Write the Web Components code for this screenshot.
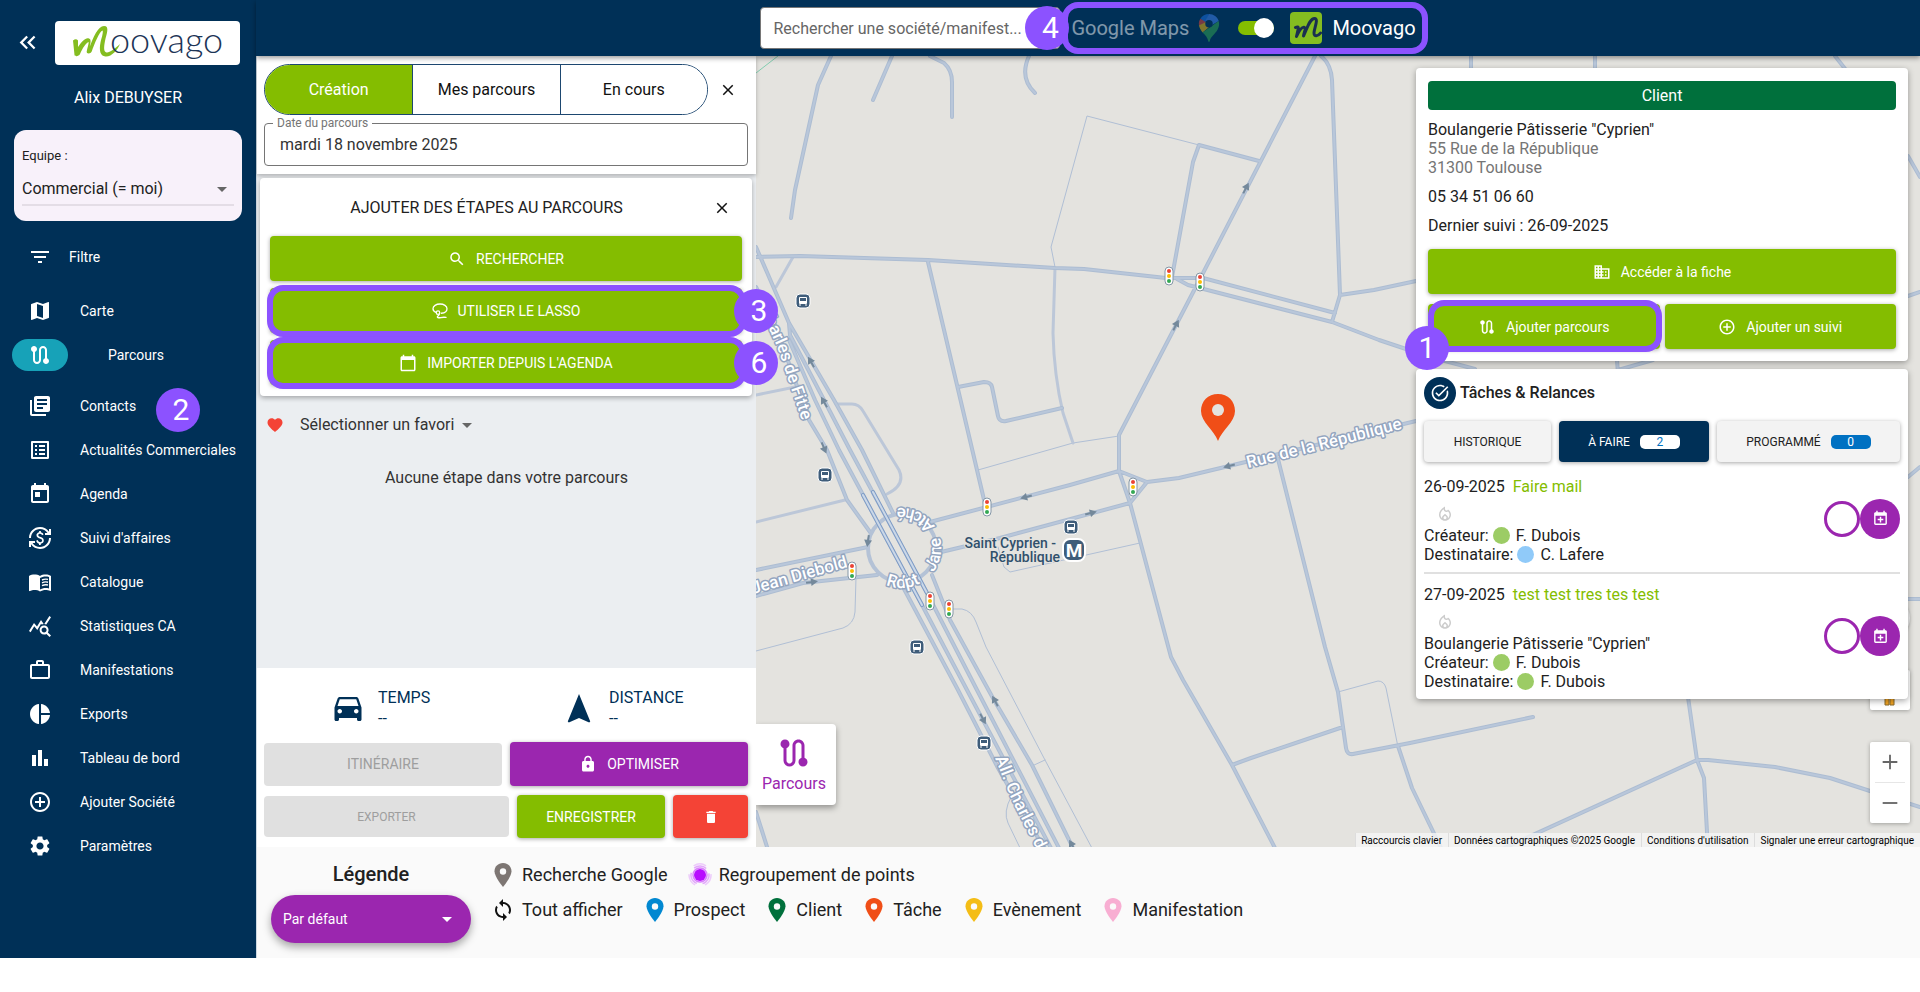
<!DOCTYPE html>
<html lang="fr">
<head>
<meta charset="utf-8">
<meta name="viewport" content="width=device-width, initial-scale=1">
<title>Moovago - Parcours</title>
<style>
  html, body { margin: 0; height: 100%; background: #fff; }
  body { font-family: Roboto, "Noto Sans", sans-serif; font-size: 16px; color: #212121; }
</style>
</head>
<body>
<mv-app></mv-app>

<script>
const ICONS = {
  collapse: '<path d="M17.59 18 19 16.59 14.42 12 19 7.41 17.59 6l-6 6zM11 18l1.41-1.41L7.83 12l4.58-4.59L11 6l-6 6z"/>',
  filter: '<path d="M10 18h4v-2h-4v2zM3 6v2h18V6H3zm3 7h12v-2H6v2z"/>',
  map: '<path d="M20.5 3l-.16.03L15 5.1 9 3 3.36 4.9c-.21.07-.36.25-.36.48V20.5c0 .28.22.5.5.5l.16-.03L9 18.9l6 2.1 5.64-1.9c.21-.07.36-.25.36-.48V3.5c0-.28-.22-.5-.5-.5zM15 19l-6-2.11V5l6 2.11V19z"/>',
  route: '<path d="M19 15.18V7c0-2.21-1.79-4-4-4s-4 1.79-4 4v10c0 1.1-.9 2-2 2s-2-.9-2-2V8.82C8.16 8.4 9 7.3 9 6c0-1.66-1.34-3-3-3S3 4.34 3 6c0 1.3.84 2.4 2 2.82V17c0 2.21 1.79 4 4 4s4-1.79 4-4V7c0-1.1.9-2 2-2s2 .9 2 2v8.18c-1.16.41-2 1.51-2 2.82 0 1.66 1.34 3 3 3s3-1.34 3-3c0-1.3-.84-2.4-2-2.82z"/>',
  contacts: '<path d="M4 6H2v14c0 1.1.9 2 2 2h14v-2H4V6zm16-4H8c-1.1 0-2 .9-2 2v12c0 1.1.9 2 2 2h12c1.1 0 2-.9 2-2V4c0-1.1-.9-2-2-2zm-1 9H9V9h10v2zm-4 4H9v-2h6v2zm4-8H9V5h10v2z"/>',
  list: '<path d="M19 5v14H5V5h14m1.1-2H3.9c-.5 0-.9.4-.9.9v16.2c0 .4.4.9.9.9h16.2c.4 0 .9-.5.9-.9V3.9c0-.5-.5-.9-.9-.9zM11 7h6v2h-6V7zm0 4h6v2h-6v-2zm0 4h6v2h-6zM7 7h2v2H7zm0 4h2v2H7zm0 4h2v2H7z"/>',
  today: '<path d="M19 3h-1V1h-2v2H8V1H6v2H5c-1.11 0-1.99.9-1.99 2L3 19c0 1.1.89 2 2 2h14c1.1 0 2-.9 2-2V5c0-1.1-.9-2-2-2zm0 16H5V8h14v11zM7 10h5v5H7z"/>',
  currency: '<path d="M12.89 11.1c-1.78-.59-2.64-.96-2.64-1.9 0-1.02 1.11-1.39 1.81-1.39 1.31 0 1.79.99 1.9 1.34l1.58-.67c-.15-.44-.82-1.91-2.66-2.23V5h-1.75v1.26c-2.6.56-2.62 2.85-2.62 2.96 0 2.27 2.25 2.91 3.35 3.31 1.58.56 2.28 1.07 2.28 2.03 0 1.13-1.05 1.61-1.98 1.61-1.82 0-2.34-1.87-2.4-2.09l-1.66.67c.63 2.19 2.28 2.78 2.9 2.96V19h1.75v-1.24c.52-.09 3.02-.59 3.02-3.22.01-1.39-.6-2.61-2.88-3.44zM3 21H1v-6h6v2H4.52c1.61 2.41 4.36 4 7.48 4 4.97 0 9-4.03 9-9h2c0 6.08-4.92 11-11 11-3.72 0-7.01-1.85-9-4.67V21zM1 12C1 5.92 5.92 1 12 1c3.72 0 7.01 1.85 9 4.67V3h2v6h-6V7h2.48C17.87 4.59 15.12 3 12 3c-4.97 0-9 4.03-9 9H1z"/>',
  book: '<path d="M21 5c-1.11-.35-2.33-.5-3.5-.5-1.95 0-4.05.4-5.5 1.5-1.45-1.1-3.55-1.5-5.5-1.5S2.45 4.9 1 6v14.65c0 .25.25.5.5.5.1 0 .15-.05.25-.05C3.1 20.45 5.05 20 6.5 20c1.95 0 4.05.4 5.5 1.5 1.35-.85 3.8-1.5 5.5-1.5 1.65 0 3.35.3 4.75 1.05.1.05.15.05.25.05.25 0 .5-.25.5-.5V6c-.6-.45-1.25-.75-2-1zm0 13.5c-1.1-.35-2.3-.5-3.5-.5-1.7 0-4.15.65-5.5 1.5V8c1.35-.85 3.8-1.5 5.5-1.5 1.2 0 2.4.15 3.5.5v11.5z"/><path d="M14 10q3-1.4 6-.6M14 12.8q3-1.4 6-.6M14 15.6q3-1.4 6-.6" fill="none" stroke="currentColor" stroke-width="1.4"/>',
  stats: '<path d="M19.88 18.47c.44-.7.7-1.51.7-2.39 0-2.49-2.01-4.5-4.5-4.5s-4.5 2.01-4.5 4.5 2.01 4.5 4.49 4.5c.88 0 1.7-.26 2.39-.7L21.58 23 23 21.58l-3.12-3.11zm-3.8.11c-1.38 0-2.5-1.12-2.5-2.5s1.12-2.5 2.5-2.5 2.5 1.12 2.5 2.5-1.12 2.5-2.5 2.5zm-.36-8.5c-.74.02-1.45.18-2.1.45l-.55-.83-3.8 6.18-3.01-3.52-3.63 5.81L1 17l5-8 3 3.5L13 6l2.72 4.08zm2.59.5c-.64-.28-1.33-.45-2.05-.49L21.38 2 23 3.18l-4.69 7.4z"/>',
  work: '<path d="M14 6V4h-4v2h4zM4 8v11h16V8H4zm16-2c1.11 0 2 .89 2 2v11c0 1.11-.89 2-2 2H4c-1.11 0-2-.89-2-2l.01-11c0-1.11.88-2 1.99-2h4V4c0-1.11.89-2 2-2h4c1.11 0 2 .89 2 2v2h4z"/>',
  pie: '<path d="M11 2v20c-5.07-.5-9-4.79-9-10s3.93-9.5 9-10zm2.03 0v8.99H22c-.47-4.74-4.24-8.52-8.97-8.99zm0 11.01V22c4.74-.47 8.5-4.25 8.97-8.99h-8.97z"/>',
  bars: '<path d="M4 9h4v11H4zM16 13h4v7h-4zM10 4h4v16h-4z"/>',
  add: '<path d="M13 7h-2v4H7v2h4v4h2v-4h4v-2h-4V7zm-1-5C6.48 2 2 6.48 2 12s4.48 10 10 10 10-4.48 10-10S17.52 2 12 2zm0 18c-4.41 0-8-3.59-8-8s3.59-8 8-8 8 3.59 8 8-3.59 8-8 8z"/>',
  settings: '<path d="M19.14 12.94c.04-.3.06-.61.06-.94 0-.32-.02-.64-.07-.94l2.03-1.58c.18-.14.23-.41.12-.61l-1.92-3.32c-.12-.22-.37-.29-.59-.22l-2.39.96c-.5-.38-1.03-.7-1.62-.94l-.36-2.54c-.04-.24-.24-.41-.48-.41h-3.84c-.24 0-.43.17-.47.41l-.36 2.54c-.59.24-1.13.57-1.62.94l-2.39-.96c-.22-.08-.47 0-.59.22L2.74 8.87c-.12.21-.08.47.12.61l2.03 1.58c-.05.3-.09.63-.09.94s.02.64.07.94l-2.03 1.58c-.18.14-.23.41-.12.61l1.92 3.32c.12.22.37.29.59.22l2.39-.96c.5.38 1.03.7 1.62.94l.36 2.54c.05.24.24.41.48.41h3.84c.24 0 .44-.17.47-.41l.36-2.54c.59-.24 1.13-.56 1.62-.94l2.39.96c.22.08.47 0 .59-.22l1.92-3.32c.12-.22.07-.47-.12-.61l-2.01-1.58zM12 15.6c-1.98 0-3.6-1.62-3.6-3.6s1.62-3.6 3.6-3.6 3.6 1.62 3.6 3.6-1.62 3.6-3.6 3.6z"/>',
  search: '<path d="M15.5 14h-.79l-.28-.27C15.41 12.59 16 11.11 16 9.5 16 5.91 13.09 3 9.5 3S3 5.91 3 9.5 5.91 16 9.5 16c1.61 0 3.09-.59 4.23-1.57l.27.28v.79l5 4.99L20.49 19l-4.99-5zm-6 0C7.01 14 5 11.99 5 9.5S7.01 5 9.5 5 14 7.01 14 9.5 11.99 14 9.5 14z"/>',
  close: '<path d="M19 6.41 17.59 5 12 10.59 6.41 5 5 6.41 10.59 12 5 17.59 6.41 19 12 13.41 17.59 19 19 17.59 13.41 12z"/>',
  lasso: '<g fill="none" stroke="currentColor" stroke-width="2" stroke-linecap="round"><path d="M6 14C3.400 13 1.500 11 1.500 8.500 1.500 4.500 6.200 1.500 12 1.500s10.500 3 10.500 7c0 3.600-3.800 6.300-8.500 6.900"/><circle cx="9" cy="14.500" r="2.600"/><path d="M11 16.500c0 2-3 3-3 4.500 0 1.400 3 1.300 5 .8 2-.4 5-.6 8-.3"/></g>',
  calendar: '<path d="M20 3h-1V1h-2v2H7V1H5v2H4c-1.1 0-2 .9-2 2v16c0 1.1.9 2 2 2h16c1.1 0 2-.9 2-2V5c0-1.1-.9-2-2-2zm0 18H4V8h16v13z"/>',
  heart: '<path d="M12 21.35l-1.45-1.32C5.4 15.36 2 12.28 2 8.5 2 5.42 4.42 3 7.5 3c1.74 0 3.41.81 4.5 2.09C13.09 3.81 14.76 3 16.5 3 19.58 3 22 5.42 22 8.5c0 3.78-3.4 6.86-8.55 11.54L12 21.35z"/>',
  car: '<path d="M18.92 5.01C18.72 4.42 18.16 4 17.5 4h-11c-.66 0-1.21.42-1.42 1.01L3 11v8c0 .55.45 1 1 1h1c.55 0 1-.45 1-1v-1h12v1c0 .55.45 1 1 1h1c.55 0 1-.45 1-1v-8l-2.08-5.99zM6.5 15c-.83 0-1.5-.67-1.5-1.5S5.67 12 6.5 12s1.5.67 1.5 1.5S7.33 15 6.5 15zm11 0c-.83 0-1.5-.67-1.5-1.5s.67-1.5 1.5-1.5 1.5.67 1.5 1.5-.67 1.5-1.5 1.5zM5 10l1.5-4.5h11L19 10H5z"/>',
  navigation: '<path d="M12 2L4.5 20.290l.71.71L12 18l6.790 3 .71-.71z"/>',
  lock: '<path d="M18 8h-1V6c0-2.76-2.24-5-5-5S7 3.24 7 6v2H6c-1.1 0-2 .9-2 2v10c0 1.1.9 2 2 2h12c1.1 0 2-.9 2-2V10c0-1.1-.9-2-2-2zm-6 9c-1.1 0-2-.9-2-2s.9-2 2-2 2 .9 2 2-.9 2-2 2zm3.1-9H8.9V6c0-1.71 1.39-3.1 3.1-3.1 1.71 0 3.1 1.39 3.1 3.1v2z"/>',
  trash: '<path d="M6 19c0 1.1.9 2 2 2h8c1.1 0 2-.9 2-2V7H6v12zM19 4h-3.500l-1-1h-5l-1 1H5v2h14V4z"/>',
  building: '<path d="M12 7V3H2v18h20V7H12zM6 19H4v-2h2v2zm0-4H4v-2h2v2zm0-4H4V9h2v2zm0-4H4V5h2v2zm4 12H8v-2h2v2zm0-4H8v-2h2v2zm0-4H8V9h2v2zm0-4H8V5h2v2zm10 12h-8v-2h2v-2h-2v-2h2v-2h-2V9h8v10zm-2-8h-2v2h2v-2zm0 4h-2v2h2v-2z"/>',
  task: '<path d="M22 5.18L10.59 16.6l-4.24-4.24 1.41-1.41 2.83 2.83 10-10L22 5.18zm-2.21 5.04c.13.57.21 1.17.21 1.78 0 4.42-3.58 8-8 8s-8-3.58-8-8 3.58-8 8-8c1.58 0 3.04.46 4.28 1.25l1.44-1.44C16.1 2.67 14.13 2 12 2 6.48 2 2 6.48 2 12s4.48 10 10 10 10-4.48 10-10c0-1.19-.22-2.33-.6-3.39l-1.61 1.61z"/>',
  flame: '<path d="M16 6l-.44.55C14.38 8.02 12 7.19 12 5.3V2S4 6 4 13c0 4.42 3.58 8 8 8s8-3.58 8-8c0-2.96-1.61-5.62-4-7zm-4 13c-1.1 0-2-.87-2-1.94 0-.51.2-.99.58-1.36L12 14.3l1.43 1.4c.37.37.57.85.57 1.36 0 1.07-.9 1.94-2 1.94zm3.96-1.5c.04-.36.22-1.89-1.13-3.22L12 11.5l-2.83 2.78C7.81 15.62 8 17.16 8.04 17.5 6.79 16.4 6 14.79 6 13c0-3.16 2.13-5.65 4.03-7.25.23 1.99 1.93 3.55 3.99 3.55.78 0 1.54-.23 2.18-.66 1.1 1.11 1.8 2.69 1.8 4.36 0 1.79-.79 3.4-2.04 4.5z"/>',
  calplus: '<path d="M19 3h-1V1h-2v2H8V1H6v2H5c-1.110 0-2 .9-2 2v14c0 1.100.890 2 2 2h14c1.100 0 2-.9 2-2V5c0-1.100-.9-2-2-2zm0 16H5V8h14v11zM11 9.500h2v3h3v2h-3v3h-2v-3H8v-2h3z"/>',
  sync: '<path d="M12 4V1L8 5l4 4V6c3.31 0 6 2.69 6 6 0 1.01-.25 1.97-.7 2.8l1.46 1.46C19.54 15.03 20 13.57 20 12c0-4.42-3.58-8-8-8zm0 14c-3.31 0-6-2.69-6-6 0-1.01.25-1.97.7-2.8L5.24 7.74C4.46 8.97 4 10.43 4 12c0 4.42 3.58 8 8 8v3l4-4-4-4v3z"/>',
  pin: '<path d="M12 0C7 0 3.500 3.600 3.500 8.300 3.500 14 12 24 12 24s8.500-10 8.500-15.700C20.500 3.600 17 0 12 0z"/><circle cx="12" cy="8.500" r="3.200" fill="#fafafa"/>',
  caret: '<path d="M7 10l5 5 5-5z"/>',
  plus: '<path d="M11 4h2v7h7v2h-7v7h-2v-7H4v-2h7z"/>',
  minus: '<path d="M4 11h16v2H4z"/>',
  cluster: '<g fill="none" stroke="#b80dff"><circle cx="12" cy="12" r="11" stroke-opacity=".2" stroke-width="1.500" stroke-dasharray="13 10" transform="rotate(-125 12 12)"/><circle cx="12" cy="12" r="9" stroke-opacity=".35" stroke-width="1.500" stroke-dasharray="13 5.800" transform="rotate(-130 12 12)"/><circle cx="12" cy="12" r="7" stroke-opacity=".5" stroke-width="1.500"/></g><circle cx="12" cy="12" r="6" fill="#b80dff"/>',
  gmaps: '<path d="M12 0C8.800 0 6 1.500 4.600 4l4.400 4z" fill="#1a73e8"/><path d="M4.600 4C3.500 5.500 3 7.500 3.400 9.800L7.600 12 9.200 6.800z" fill="#ea4335"/><path d="M12 0c4 0 7.200 2.500 8.300 6L14.500 9.500 9 5.500z" fill="#4285f4"/><path d="M3.400 9.800c.4 2.200 1.600 4 3.100 6L14.800 9 12 5.500z" fill="#fbbc04"/><path d="M20.300 6c.8 2.800.2 5.200-1 7.400C17 17.500 13.500 19 12.600 23.300c-.2.900-1 .9-1.200 0C10.800 20 9 18.200 6.500 15.800z" fill="#34a853"/><circle cx="12" cy="8.300" r="3.200" fill="#003057"/>'
};

/* Registers an element whose shadow root is cloned from a template. */
function define(tag, css, html) {
  const fixed = typeof html === 'string' ? makeTemplate(css, html) : null;
  customElements.define(tag, class extends HTMLElement {
    connectedCallback() {
      if (this.shadowRoot) return;
      const tpl = fixed || makeTemplate(css, html(this));
      this.attachShadow({ mode: 'open' }).append(tpl.content.cloneNode(true));
    }
  });
}
function makeTemplate(css, html) {
  const t = document.createElement('template');
  t.innerHTML = `<style>*{box-sizing:border-box}${css}</style>${html}`;
  return t;
}

define('mv-icon', `
  :host { display: inline-flex; flex: none; width: var(--size, 24px); height: var(--size, 24px); }
  svg { width: 100%; height: 100%; fill: currentColor; display: block; }
`, el => `<svg viewBox="0 0 24 24" aria-hidden="true">${ICONS[el.getAttribute('name')]}</svg>`);

define('mv-step', `
  :host { position: absolute; z-index: 5; display: flex; align-items: center; justify-content: center;
    width: 44px; height: 44px; border-radius: 50%; background: #8c52ff; color: #fff; padding-left: 6px;
    font: 30px/44px Roboto, sans-serif; }
`, '<slot></slot>');

define('mv-button', `
  :host { display: block; position: relative; }
  button { display: flex; align-items: center; justify-content: center; gap: 10px; width: 100%; height: var(--h, 45px);
    padding: 0 8px; border: 0; border-radius: 4px; background: var(--bg, #84bd00); color: var(--fg, #fff);
    font: 14px/20px Roboto, sans-serif; box-shadow: 0 1px 4px rgba(0,0,0,.35); cursor: pointer; }
  button:disabled { background: #e0e0e0; color: #9e9e9e; box-shadow: none; cursor: default; }
  :host([framed])::after { content: ""; position: absolute; inset: var(--frame, -3px -4px -4px -3px);
    border: 6px solid #8c52ff; border-radius: 16px; pointer-events: none; }
  :host([small]) button { font-size: 12px; }
`, el => `<button type="button" ${el.hasAttribute('disabled') ? 'disabled' : ''} ${el.title ? `aria-label="${el.title}"` : ''}>
  ${el.hasAttribute('icon') ? `<mv-icon name="${el.getAttribute('icon')}" style="--size:${el.getAttribute('icon-size') || 18}px"></mv-icon>` : ''}<slot></slot></button>`);

define('mv-nav-item', `
  :host { display: block; }
  a { display: flex; align-items: center; height: 44px; padding-left: 12px; color: #fff; text-decoration: none;
    font: 14px/20px Roboto, sans-serif; }
  .pill { display: flex; align-items: center; justify-content: center; width: 56px; height: 32px; border-radius: 16px; margin-right: 12px; }
  :host([wide]) .pill { margin-right: 1px; }
  :host([active]) .pill { background: #17a2b8; margin-right: 40px; }
  :host([gap]) { margin-top: 7px; }
`, el => `<a href="#"><span class="pill"><mv-icon name="${el.getAttribute('icon')}"></mv-icon></span><slot></slot></a>`);

define('mv-logo', `
  :host { display: block; width: 185px; height: 44px; background: #fff; border-radius: 4px; }
  svg { display: block; }
`, `<svg width="185" height="44" viewBox="0 0 185 44" role="img" aria-label="Moovago">
    <path d="M18 19.500q3-2.500 5 0v6.500c4-6 8-10 11-8.500 2.500 1 1.500 4 .8 8C38 17 43 5 49 5c6 0 2.500 8 1 15-1.200 6-1.500 11 1.500 11.500 3 .5 8-3.500 13.500-8.500-2.500 6-8.500 13-14.500 12.500-5.500-.5-6.500-6.500-5-14 .8-4 2.800-9 2.200-12-3.500 1-8 13-11 21-1 2.500-5.500 2.500-5 0 .5-3.500 2-7 2-9.500-3 1-6 6-8.700 12-1 2.300-5 3-5.500 1z" fill="#84bd20"/>
    <text x="55" y="32" font-family="Lato" font-size="36" font-weight="300" fill="#1d3557">oovago</text>
  </svg>`);

define('mv-sidebar', `
  :host { display: flex; flex-direction: column; width: 256px; background: #003057; color: #fff; position: relative; }
  .brand { display: flex; align-items: center; gap: 14px; padding: 21px 0 0 14px; }
  .collapse { border: 0; padding: 0; background: none; color: #fff; height: 28px; width: 27px; --size: 27px; cursor: pointer; }
  .user { text-align: center; line-height: 24px; margin-top: 21px; }
  .team { margin: 20px 14px 0; height: 91px; border-radius: 12px; background: #f8f1fa; color: #212121; padding: 17px 8px 0; }
  .team label { display: block; font-size: 13px; line-height: 18px; }
  .field { position: relative; display: flex; align-items: center; height: 32px; margin-top: 9px; border-bottom: 2px solid #e4dde6; }
  select { appearance: none; width: 100%; height: 24px; border: 0; padding: 0; background: none; color: inherit; font: 16px/24px Roboto, sans-serif; }
  .field mv-icon { position: absolute; right: 0; color: #666; pointer-events: none; }
  nav { display: flex; flex-direction: column; }
  nav.filter { margin-top: 14px; margin-bottom: 10px; }
`, `
  <div class="brand"><button class="collapse" type="button" aria-label="Réduire le menu"><mv-icon name="collapse"></mv-icon></button><mv-logo></mv-logo></div>
  <div class="user">Alix DEBUYSER</div>
  <div class="team"><label for="team">Equipe :</label>
    <div class="field"><select id="team"><option>Commercial (= moi)</option></select><mv-icon name="caret"></mv-icon></div></div>
  <nav class="filter"><mv-nav-item icon="filter" wide>Filtre</mv-nav-item></nav>
  <nav>
    <mv-nav-item icon="map">Carte</mv-nav-item>
    <mv-nav-item icon="route" active>Parcours</mv-nav-item>
    <mv-nav-item icon="contacts" gap>Contacts</mv-nav-item>
    <mv-nav-item icon="list">Actualités Commerciales</mv-nav-item>
    <mv-nav-item icon="today">Agenda</mv-nav-item>
    <mv-nav-item icon="currency">Suivi d'affaires</mv-nav-item>
    <mv-nav-item icon="book">Catalogue</mv-nav-item>
    <mv-nav-item icon="stats">Statistiques CA</mv-nav-item>
    <mv-nav-item icon="work">Manifestations</mv-nav-item>
    <mv-nav-item icon="pie">Exports</mv-nav-item>
    <mv-nav-item icon="bars">Tableau de bord</mv-nav-item>
    <mv-nav-item icon="add">Ajouter Société</mv-nav-item>
    <mv-nav-item icon="settings">Paramètres</mv-nav-item>
  </nav>
  <mv-step style="left:156px;top:388px">2</mv-step>`);

define('mv-topbar', `
  :host { display: flex; align-items: center; justify-content: center; gap: 11px; height: 56px; background: #003057;
    box-shadow: 0 2px 5px rgba(0,0,0,.4); position: relative; z-index: 3; }
  .search { width: 300px; height: 42px; border: 1px solid #767676; border-radius: 4px; padding: 0 12px; background: #fff;
    font: 16px/24px Roboto, sans-serif; color: #212121; }
  .search::placeholder { color: #666; opacity: 1; }
  .provider { position: relative; display: flex; align-items: center; color: #fff; font-size: 20px; line-height: 28px; white-space: nowrap; }
  .provider::after { content: ""; position: absolute; inset: -10px -12px -10px -9px; border: 6px solid #8c52ff; border-radius: 16px; pointer-events: none; }
  .off { opacity: .5; display: flex; align-items: center; gap: 6px; }
  .off mv-icon { --size: 28px; }
  input[type=checkbox] { appearance: none; position: relative; width: 36px; height: 20px; margin: 0 16px 0 15px; cursor: pointer; }
  input[type=checkbox]::before { content: ""; position: absolute; left: 0; top: 3px; width: 36px; height: 14px; border-radius: 7px; background: #84bd00; }
  input[type=checkbox]::after { content: ""; position: absolute; right: 0; top: 0; width: 20px; height: 20px; border-radius: 50%; background: #fff; }
  .tile { width: 32px; height: 32px; margin-right: 10px; }
  mv-step { left: -46px; top: -6px; }
`, `
  <input class="search" type="search" aria-label="Rechercher une société" placeholder="Rechercher une société/manifest...">
  <div class="provider">
    <span class="off">Google Maps<mv-icon name="gmaps"></mv-icon></span>
    <input type="checkbox" id="src" checked aria-label="Utiliser Moovago">
    <svg class="tile" viewBox="0 0 32 32" aria-hidden="true"><rect width="32" height="32" rx="4" fill="#84bd20"/>
      <path d="M5.500 15.500c2-1.200 3-.5 2.800 1L6.500 24.500C9 19 12 14.500 14.500 15.500c2 1-.8 5-1 8.500C17 17 19.500 6.500 24.500 6.500c4.500 0-.5 10-.5 14.500 0 4 4 3.500 6.500 0" fill="none" stroke="#1a2f50" stroke-width="3" stroke-linecap="round" stroke-linejoin="round"/></svg>
    <label for="src">Moovago</label>
    <mv-step>4</mv-step>
  </div>`);

define('mv-route-panel', `
  :host { display: flex; flex-direction: column; width: 500px; flex: none; background: #ebeef1; border-left: 1px solid #cdd8e2; }
  .head { background: #fff; padding: 8px 8px 8px 7px; box-shadow: 0 2px 4px rgba(0,0,0,.25); }
  .tabs { display: flex; align-items: center; }
  .seg { display: grid; grid-template-columns: repeat(3, 1fr); width: 444px; height: 51px; border: 1px solid #1d4770; border-radius: 26px; overflow: hidden; }
  .seg button { border: 0; background: #fff; color: #111; font: 16px/24px Roboto, sans-serif; }
  .seg button + button { border-left: 1px solid #1d4770; }
  .seg .on { background: #84bd00; color: #fff; }
  .x { width: 24px; height: 24px; border: 0; padding: 0; background: none; color: #111; --size: 18px; display: flex; align-items: center; justify-content: center; cursor: pointer; }
  .tabs .x { margin-left: 8px; }
  fieldset { margin: 0; padding: 0 15px; border: 1px solid #757575; border-radius: 4px; height: 51px; }
  legend { margin-left: -7px; padding: 0 4px; font-size: 12px; line-height: 16px; color: #757575; }
  fieldset input { border: 0; outline: 0; padding: 0; width: 100%; font: 16px/24px Roboto, sans-serif; height: 24px; color: #333; background: none; display: block; margin-top: 2px; }
  .add { margin: 4px 4px 0 3px; background: #fff; border-radius: 4px; padding: 18px 10px 11px; box-shadow: 0 2px 5px rgba(0,0,0,.3); position: relative; }
  .add header { display: flex; align-items: center; height: 24px; margin-bottom: 16px; }
  .add h2 { flex: 1; margin: 0; text-align: center; font-size: 16px; line-height: 24px; font-weight: 400; padding-right: 7px; }
  .add .x { margin-right: 8px; }
  .stack { display: grid; gap: 7px; }
  .fav { display: flex; align-items: center; padding: 17px 8px 0 9px; height: 41px; }
  .fav > mv-icon { --size: 18px; color: #f44336; margin-right: 16px; }
  .fav .pick { position: relative; display: flex; align-items: center; }
  .fav select { appearance: none; height: 24px; border: 0; background: none; padding: 0 24px 0 0; font: 16px/24px Roboto, sans-serif; color: #333; }
  .pick mv-icon { position: absolute; right: 0; color: #666; pointer-events: none; }
  .empty { margin: 29px 0 0; text-align: center; line-height: 24px; color: #333; flex: 1; }
  .foot { background: #fff; padding: 19px 8px 9px 7px; }
  .stats { display: grid; grid-template-columns: 249px 1fr; color: #003057; height: 55px; }
  .stat { display: flex; gap: 12px; line-height: 21px; padding-left: 66px; }
  .stat mv-icon { --size: 36px; margin-top: 4px; }
  .stat:last-child { padding-left: 48px; }
  .row { display: grid; gap: 8px; margin-bottom: 9px; align-items: center; }
  .r1 { grid-template-columns: 1fr 1fr; }
  .r2 { grid-template-columns: 245px 148px 1fr; margin-bottom: 0; }
  .s3, .s6 { right: -26px; }
  .s3 { top: 111px; } .s6 { top: 163px; }
`, `
  <div class="head">
    <div class="tabs"><div class="seg"><button class="on" type="button">Création</button><button type="button">Mes parcours</button><button type="button">En cours</button></div>
      <button class="x" type="button" aria-label="Fermer"><mv-icon name="close"></mv-icon></button></div>
    <fieldset><legend><label for="date">Date du parcours</label></legend><input id="date" type="text" value="mardi 18 novembre 2025"></fieldset>
  </div>
  <section class="add">
    <header><h2>AJOUTER DES ÉTAPES AU PARCOURS</h2><button class="x" type="button" aria-label="Fermer l'ajout"><mv-icon name="close"></mv-icon></button></header>
    <div class="stack">
      <mv-button icon="search">RECHERCHER</mv-button>
      <mv-button icon="lasso" icon-size="16" framed>UTILISER LE LASSO</mv-button>
      <mv-button icon="calendar" framed>IMPORTER DEPUIS L'AGENDA</mv-button>
    </div>
    <mv-step class="s3">3</mv-step><mv-step class="s6">6</mv-step>
  </section>
  <div class="fav"><mv-icon name="heart"></mv-icon><div class="pick"><select aria-label="Favori"><option>Sélectionner un favori</option></select><mv-icon name="caret"></mv-icon></div></div>
  <p class="empty">Aucune étape dans votre parcours</p>
  <div class="foot">
    <div class="stats"><div class="stat"><mv-icon name="car"></mv-icon><div>TEMPS<br>--</div></div>
      <div class="stat"><mv-icon name="navigation"></mv-icon><div>DISTANCE<br>--</div></div></div>
    <div class="row r1"><mv-button disabled style="--h:43px">ITINÉRAIRE</mv-button><mv-button icon="lock" style="--bg:#9b26af;--h:44px">OPTIMISER</mv-button></div>
    <div class="row r2"><mv-button disabled small style="--h:41px">EXPORTER</mv-button><mv-button style="--h:43px">ENREGISTRER</mv-button><mv-button icon="trash" icon-size="16" title="Supprimer" style="--bg:#f44336;--h:43px"></mv-button></div>
  </div>`);

define('mv-company-card', `
  :host { display: block; background: #fff; border-radius: 4px; padding: 13px 12px 12px; box-shadow: 0 2px 6px rgba(0,0,0,.35); line-height: 19px; position: relative; }
  .type { background: #00703c; color: #fff; text-align: center; border-radius: 4px; line-height: 29px; height: 29px; margin-bottom: 10px; }
  .muted { color: #757575; }
  address { font-style: normal; }
  p { margin: 10px 0 0; }
  .actions { display: grid; grid-template-columns: 1fr 1fr; gap: 10px 5px; margin-top: 14px; }
  .wide { grid-column: 1 / -1; }
  .first { --frame: -4px -2px -3px 0; }
  mv-step { left: -11px; bottom: -9px; padding-left: 0; }
`, `
  <div class="type">Client</div>
  <div>Boulangerie Pâtisserie "Cyprien"</div>
  <address class="muted">55 Rue de la République<br>31300 Toulouse</address>
  <p>05 34 51 06 60</p>
  <p>Dernier suivi : 26-09-2025</p>
  <div class="actions">
    <mv-button class="wide" icon="building">Accéder à la fiche</mv-button>
    <mv-button class="first" icon="route" framed>Ajouter parcours</mv-button>
    <mv-button icon="add">Ajouter un suivi</mv-button>
  </div>
  <mv-step>1</mv-step>`);

define('mv-person', `
  :host { display: flex; align-items: center; line-height: 19px; }
  i { width: 17px; height: 17px; border-radius: 50%; margin: 0 6px 0 4px; }
`, el => `<span>${el.getAttribute('role-name')}:</span><i style="background:${el.getAttribute('tint')}"></i><slot></slot>`);

define('mv-task-item', `
  :host { display: flex; align-items: center; justify-content: space-between; line-height: 19px; }
  .title a { color: #84bd00; text-decoration: none; margin-left: 8px; }
  .fire { color: #ccc; --size: 18px; margin: 9px 0 4px 12px; height: 17px; display: flex; align-items: center; }
  .acts { display: flex; align-items: center; margin-bottom: 4px; }
  button { border-radius: 50%; padding: 0; cursor: pointer; }
  .done { width: 36px; height: 36px; border: 3px solid #9b26af; background: #fff; }
  .plan { width: 40px; height: 40px; border: 0; background: #9b26af; color: #fff; --size: 17px; display: flex; align-items: center; justify-content: center; }
`, el => `<div><div class="title">${el.getAttribute('date')}<a href="#">${el.getAttribute('label')}</a></div>
  <div class="fire"><mv-icon name="flame"></mv-icon></div><slot></slot></div>
  <div class="acts"><button class="done" type="button" aria-label="Terminer"></button><button class="plan" type="button" aria-label="Planifier"><mv-icon name="calplus"></mv-icon></button></div>`);

define('mv-task-card', `
  :host { display: block; background: #fff; border-radius: 4px; padding: 8px; box-shadow: 0 2px 6px rgba(0,0,0,.35); }
  header { display: flex; align-items: center; gap: 4px; }
  header span { width: 32px; height: 32px; border-radius: 50%; background: #003057; color: #fff; --size: 20px; display: flex; align-items: center; justify-content: center; }
  h2 { margin: 0; font-size: 16px; line-height: 24px; font-weight: 500; }
  .tabs { display: grid; grid-template-columns: 127px 150px 1fr; gap: 8px; margin: 12px 0 15px; }
  .tabs button { height: 41px; border: 0; border-radius: 4px; background: #f3f3f3; color: #212121; font: 12px/16px Roboto, sans-serif;
    box-shadow: 0 1px 4px rgba(0,0,0,.35); display: flex; align-items: center; justify-content: center; gap: 10px; padding: 0; }
  .tabs .on { background: #003057; color: #fff; }
  .n { width: 40px; border-radius: 5px; background: #0071c2; color: #fff; line-height: 14px; }
  .on .n { background: #fff; color: #0071c2; }
  hr { border: 0; border-top: 2px solid #e0e0e0; margin: 8px 0 11px; }
  .who { line-height: 19px; }
`, `
  <header><span><mv-icon name="task"></mv-icon></span><h2>Tâches &amp; Relances</h2></header>
  <div class="tabs"><button type="button">HISTORIQUE</button><button class="on" type="button">À FAIRE <span class="n">2</span></button><button type="button">PROGRAMMÉ <span class="n">0</span></button></div>
  <mv-task-item date="26-09-2025" label="Faire mail">
    <mv-person role-name="Créateur" tint="#9ccc65">F. Dubois</mv-person>
    <mv-person role-name="Destinataire" tint="#90caf9">C. Lafere</mv-person></mv-task-item>
  <hr>
  <mv-task-item date="27-09-2025" label="test test tres tes test">
    <div class="who">Boulangerie Pâtisserie "Cyprien"</div>
    <mv-person role-name="Créateur" tint="#9ccc65">F. Dubois</mv-person>
    <mv-person role-name="Destinataire" tint="#9ccc65">F. Dubois</mv-person></mv-task-item>`);

const ROADS = [
  'M831 56 818 85 795 190 791 218', 'M892 56 873 100', 'M930 56 944 63Q952 70 952 82V117', 'M1029 56Q1019 78 1035 93',
  'M1259 161 1199 145 1193 162 1172 277', 'M1315 56 1201 277 1119 435V472', 'M1321 56Q1331 64 1332 80L1340 295 1332 322',
  'M1340 295 1374 290 1416 281', 'M756 257 800 256 928 260 1055 268 1084 269 1166 278H1203L1335 313', 'M1177 279 1188 285 1332 322 1379 340 1430 357 1475 369',
  'M1908 296 1920 292', 'M928 262 957 385 977 470 985 504', 'M756 247 789 323 834 400 862 450 893 513',
  'M789 323 790 335 824 400 850 450 927 593 977 690 1060 850', 'M789 340 815 400 839 450 922 605 967 690 1052 850',
  'M756 287 776 327 809 420 827 450 847 500 870 532', 'M903 587 958 690 998 768 1045 850', 'M932 575 950 620 994 700 1032 765 1074 850',
  'M756 570 868 547', 'M756 596 803 583 877 575', 'M930 522 1070 485 1119 471 1147 482 1179 478 1229 466 1416 421', 'M937 553 1000 538 1130 503',
  'M1147 482 1130 503', 'M1119 471 1130 503 1171 657 1183 680 1232 765 1276 850', 'M1232 765 1251 758 1343 727',
  'M1277 455 1325 647 1338 692 1346 748Q1347 755 1353 754L1410 743 1533 717', 'M1398 746 1412 788 1442 850',
  'M1687 690 1697 760 1704 778 1708 850', 'M1500 850 1697 760H1708L1775 767 1830 778 1870 791 1920 807',
  'M1908 156 1920 177', 'M1471 56V68', 'M1595 56V68', 'M1835 56 1846 70', 'M1908 477 1920 467', 'M1908 599H1920', 'M1618 370 1653 360', 'M1618 374 1617 360',
  'M756 812 768 850', 'M958 387 984 382Q991 382 992 387L998 416Q999 422 1006 421L1062 408'
];
const LANES = ['M793 257 776 287', 'M756 395 800 386', 'M756 522 845 500', 'M836 404H852Q859 404 863 411L899 470Q906 485 887 494', 'M1055 268 1053 333Q1054 375 1063 413L1073 443'];
const PATHS = ['M1199 145 1087 116 1051 247 1055 267', 'M856 578 855 612Q854 624 843 628L756 651', 'M1073 443 978 470', 'M1073 443 1119 436',
  'M998 547 1004 567 1010 572 1140 543', 'M950 609H962Q972 611 976 622L986 647 1045 760 1093 850', 'M1032 766 1045 760', 'M1011 797Q1003 812 1008 823L1021 850',
  'M1338 692 1378 681Q1384 681 1386 688L1398 747'];
const ARROWS = [[1246,188,-63],[1176,325,-63],[811,362,-120],[824,402,-120],[824,448,67],[1026,497,165],[1091,513,-15],[1229,466,165],[868,541,98],[812,582,-8],[995,701,-118],[983,719,62],[1072,845,-118]];
const LIGHTS = [[1169,276],[1200,282],[1133,487],[987,507],[852,571],[930,601],[949,609]];
const STOPS = [[803,301],[825,475],[1071,527],[917,647],[984,743]];
const lines = (list, w, c) => `<path d="${list.join('')}" stroke="${c}" stroke-width="${w}"/>`;

define('mv-map', `
  :host { display: block; position: relative; flex: 1; min-width: 0; overflow: hidden; background: #e4e3df; }
  svg.canvas { position: absolute; left: 0; top: 0; width: 1164px; height: 791px; display: block; }
  .canvas text { font-family: Roboto, sans-serif; }
  .street text { font-size: 17px; font-weight: 500; fill: #fff; stroke: #93a5bf; stroke-width: 3px; paint-order: stroke; stroke-linejoin: round; }
  .cards { position: absolute; top: 12px; right: 12px; width: 492px; display: grid; gap: 8px; z-index: 1; }
  .route { position: absolute; left: 0; bottom: 42px; width: 80px; height: 81px; border: 0; border-radius: 0 4px 4px 0; padding: 2px 4px 0 0; background: #fff; color: #9b26af;
    box-shadow: 0 3px 6px rgba(0,0,0,.35); font: 16px/24px Roboto, sans-serif; --size: 36px; display: flex; flex-direction: column; align-items: center; justify-content: center; gap: 1px; z-index: 2; }
  .zoom { position: absolute; right: 10px; bottom: 24px; width: 40px; background: #fff; box-shadow: 0 1px 4px rgba(0,0,0,.3); border-radius: 2px; padding: 0 5px; }
  .zoom button { display: flex; align-items: center; justify-content: center; width: 30px; height: 40px; border: 0; padding: 0; background: none; color: #666; --size: 22px; }
  .zoom button + button { border-top: 1px solid #e6e6e6; height: 41px; }
  .peg { position: absolute; right: 10px; bottom: 137px; width: 40px; height: 40px; background: #fff; border: 0; padding: 0; border-radius: 2px; box-shadow: 0 1px 4px rgba(0,0,0,.3); }
  .round { position: absolute; right: 10px; bottom: 209px; width: 40px; height: 40px; border: 0; border-radius: 50%; background: #eee; box-shadow: 0 1px 3px rgba(0,0,0,.2); }
  .credits { position: absolute; right: 0; bottom: 0; height: 14px; display: flex; background: rgba(245,245,245,.8); }
  .credits a { color: #000; text-decoration: none; font: 10px/15px Roboto, sans-serif; padding: 0 6px 0 5px; white-space: nowrap; border-left: 1px solid #ddd; }
`, `
  <svg class="canvas" viewBox="756 56 1164 791" role="img" aria-label="Carte de Saint-Cyprien">
    <g fill="none" stroke-linejoin="round" stroke-linecap="round">
      ${lines(PATHS, 1, '#b0bfd5')}${lines(LANES, 3, '#bcc7d8')}
      ${lines(ROADS, 4, '#adbdd2')}${lines(ROADS, 2, '#b9c7da')}
      <circle cx="902" cy="548" r="34" stroke="#b4c2d6" stroke-width="4"/>
      <path d="M863 495 922 605M873 492 927 593" stroke="#7f9cc6" stroke-width="4"/><path d="M863 495 922 605M873 492 927 593" stroke="#cbd8e8" stroke-width="2"/>
      <path d="M756 73 778 56" stroke="#83cdb0" stroke-width="1"/>
    </g>
    <g fill="#74899b">${ARROWS.map(([x, y, a]) => `<path transform="translate(${x} ${y}) rotate(${a})" d="M6 0-1-4V-1H-6V1H-1V4z"/>`).join('')}</g>
    <g class="street">
      <path id="p1" d="M1248 468 1340 445 1420 424" fill="none"/><path id="p2" d="M753 594 872 560" fill="none"/>
      <path id="p3" d="M760 309 778 349 800 415 830 505" fill="none"/><path id="p4" d="M995 758 1010 796 1054 884" fill="none"/>
      <path id="p5" d="M886 585A40 40 0 1 0 886 511" fill="none"/>
      <text><textPath href="#p1">Rue de la République</textPath></text><text><textPath href="#p2">Jean Diebold</textPath></text>
      <text><textPath href="#p3">Charles de Fitte</textPath></text><text><textPath href="#p4">All. Charles de Fitte</textPath></text>
      <text><textPath href="#p5">Rdpt</textPath></text><text><textPath href="#p5" startOffset="52">Jane</textPath></text><text><textPath href="#p5" startOffset="101">Atché</textPath></text>
    </g>
    ${LIGHTS.map(([x, y]) => `<g transform="translate(${x} ${y})"><rect x="-4" y="-9" width="8" height="18" rx="4" fill="#fff" stroke="#8496a6"/><circle cy="-5" r="2" fill="#ea4335"/><circle r="2" fill="#fbbc04"/><circle cy="5" r="2" fill="#34a853"/></g>`).join('')}
    ${STOPS.map(([x, y]) => `<g transform="translate(${x} ${y})"><rect x="-7" y="-7" width="14" height="14" rx="4" fill="#3f5d7a" stroke="#fff"/><rect x="-4" y="-4" width="8" height="7" rx="1" fill="#fff"/><path d="M-3-3H3V0H-3z" fill="#3f5d7a"/><path d="M-3 3v2M3 3v2" stroke="#fff"/></g>`).join('')}
    <g transform="translate(1074 550)"><rect x="-11" y="-11" width="22" height="22" rx="7" fill="#3f5d7a" stroke="#fff" stroke-width="2"/><text y="7" text-anchor="middle" font-size="19" font-weight="700" fill="#fff">M</text></g>
    <g font-size="14" font-weight="500" fill="#30506c" text-anchor="end" stroke="#e4e3df" stroke-width="2" paint-order="stroke"><text x="1056" y="548">Saint Cyprien -</text><text x="1060" y="562">République</text></g>
    <path d="M1218 394c-10 0-17 7-17 17 0 11 13 19 17 30 4-11 17-19 17-30 0-10-7-17-17-17z" fill="#f04e17"/><circle cx="1218" cy="410" r="6" fill="#e4e3df"/>
  </svg>
  <button class="round" type="button" aria-label="Caméra"></button>
  <button class="peg" type="button" aria-label="Street View"><svg width="40" height="40" aria-hidden="true"><path d="M15 28h4v7h-4zM20 28h4v7h-4z" fill="#f5a623" stroke="#8a6a2a"/></svg></button>
  <div class="zoom"><button type="button" aria-label="Zoom avant"><mv-icon name="plus"></mv-icon></button><button type="button" aria-label="Zoom arrière"><mv-icon name="minus"></mv-icon></button></div>
  <div class="credits"><a href="#">Raccourcis clavier</a><a href="#">Données cartographiques ©2025 Google</a><a href="#">Conditions d'utilisation</a><a href="#">Signaler une erreur cartographique</a></div>
  <button class="route" type="button"><mv-icon name="route"></mv-icon>Parcours</button>
  <div class="cards"><slot></slot></div>`);

define('mv-legend-item', `
  :host { display: flex; align-items: center; gap: 7px; font-size: 18px; line-height: 24px; white-space: nowrap; }
  mv-icon { color: var(--tint, #111); }
`, el => `<mv-icon name="${el.getAttribute('icon') || 'pin'}"></mv-icon><slot></slot>`);

define('mv-legend', `
  :host { display: flex; height: 111px; background: #fafafa; padding-left: 14px; gap: 20px; border-left: 1px solid #cdd8e2; }
  .pick { width: 200px; padding-top: 13px; text-align: center; }
  .pick label { display: block; font-size: 20px; font-weight: 500; line-height: 28px; }
  .sel { position: relative; display: flex; align-items: center; margin-top: 7px; color: #fff; }
  select { appearance: none; width: 100%; height: 48px; border: 0; border-radius: 24px; padding: 0 12px; background: #9b26af; color: #fff;
    font: 14px/20px Roboto, sans-serif; box-shadow: 0 4px 8px rgba(0,0,0,.35); }
  .sel mv-icon { position: absolute; right: 12px; pointer-events: none; }
  .items { display: grid; align-content: start; gap: 11px; padding-top: 16px; }
  .line { display: flex; gap: 20px; }
`, `
  <div class="pick"><label for="mode">Légende</label><div class="sel"><select id="mode"><option>Par défaut</option></select><mv-icon name="caret"></mv-icon></div></div>
  <div class="items">
    <div class="line"><mv-legend-item style="--tint:#7d7673">Recherche Google</mv-legend-item><mv-legend-item icon="cluster">Regroupement de points</mv-legend-item></div>
    <div class="line"><mv-legend-item icon="sync">Tout afficher</mv-legend-item><mv-legend-item style="--tint:#0288d1">Prospect</mv-legend-item><mv-legend-item style="--tint:#00703c">Client</mv-legend-item>
      <mv-legend-item style="--tint:#f04e17">Tâche</mv-legend-item><mv-legend-item style="--tint:#f4bd16">Evènement</mv-legend-item><mv-legend-item style="--tint:#f8aed2">Manifestation</mv-legend-item></div>
  </div>`);

define('mv-app', `
  :host { display: grid; grid-template-columns: auto 1fr; height: calc(100vh - 34px); min-height: 880px; }
  .main { display: flex; flex-direction: column; min-width: 0; }
  .work { display: flex; flex: 1; min-height: 0; }
  mv-route-panel { position: relative; z-index: 2; }
`, `
  <mv-sidebar></mv-sidebar>
  <div class="main"><mv-topbar></mv-topbar>
    <div class="work"><mv-route-panel></mv-route-panel><mv-map><mv-company-card></mv-company-card><mv-task-card></mv-task-card></mv-map></div>
    <mv-legend></mv-legend></div>`);
</script>
</body>
</html>
